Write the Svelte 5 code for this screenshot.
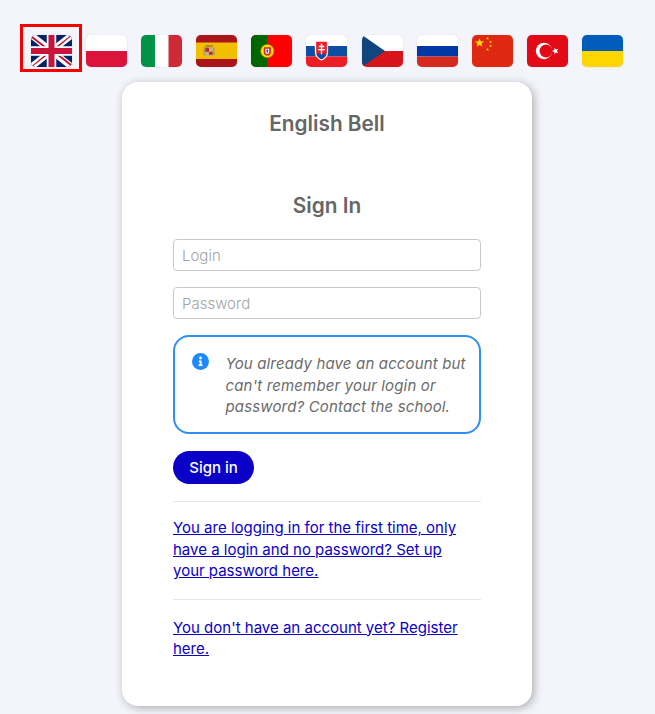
<script lang="ts">
	const flags = ['gb', 'pl', 'it', 'es', 'pt', 'sk', 'cz', 'ru', 'cn', 'tr', 'ua'];
	const star = 'M0-1 .29-.31 1-.31 .43 .12 .62 .81 0 .4-.62 .81-.43 .12-1-.31-.29-.31Z';
</script>

<div class="page">
	<nav class="flags">
		{#each flags as flag, index}
			<a class="flag" class:active={index === 0} href="#{flag}" aria-label={flag}>
				<svg viewBox="0 0 41 32" width="41" height="32">
					{#if flag === 'gb'}
						<rect width="41" height="32" fill="#012169" />
						<path d="M0 0 41 32M41 0 0 32" stroke="#fff" stroke-width="6.5" />
						<path d="M0 0 17 13.3H14L0 2.4ZM41 0V.4L26 13H23.4L40 0ZM41 32 24 18.7H27L41 29.6ZM0 32V31.6L15 19H17.6L1 32Z" fill="#c8102e" />
						<path d="M20.5 0V32M0 16H41" stroke="#fff" stroke-width="9.5" />
						<path d="M20.5 0V32M0 16H41" stroke="#c8133a" stroke-width="6" />
					{:else if flag === 'pl'}
						<rect width="41" height="16" fill="#fff" />
						<rect y="16" width="41" height="16" fill="#dc143c" />
					{:else if flag === 'it'}
						<rect width="14" height="32" fill="#009246" />
						<rect x="14" width="14" height="32" fill="#fff" />
						<rect x="27.5" width="13.5" height="32" fill="#ce2b37" />
					{:else if flag === 'es'}
						<rect width="41" height="32" fill="#aa151b" />
						<rect y="7.5" width="41" height="16.5" fill="#f1bf00" />
						<rect x="9" y="10" width="8" height="2.5" rx="1" fill="#c08a2a" />
						<path d="M9 12.5H17V18.5C17 20.5 15 21.5 13 21.5 11 21.5 9 20.5 9 18.5Z" fill="#c8b27a" />
						<rect x="9.3" y="12.8" width="3.7" height="4" fill="#b5302a" />
						<rect x="13" y="16.8" width="3.7" height="3" fill="#b5302a" />
						<rect x="7.5" y="12.5" width="1.3" height="8" fill="#a8937a" />
						<rect x="17.2" y="12.5" width="1.3" height="8" fill="#a8937a" />
					{:else if flag === 'pt'}
						<rect width="41" height="32" fill="#f00" />
						<rect width="16.3" height="32" fill="#060" />
						<circle cx="16.3" cy="16" r="6.6" fill="#ffe000" stroke="#8a9a20" stroke-width=".6" />
						<path d="M12.8 12.3H19.8V17.5C19.8 19.6 18 20.6 16.3 20.6 14.6 20.6 12.8 19.6 12.8 17.5Z" fill="#e02020" />
						<path d="M14.4 13.8H18.2V17C18.2 18.2 17.2 18.9 16.3 18.9 15.4 18.9 14.4 18.2 14.4 17Z" fill="#fff" />
						<path d="M16.3 14.4V18M15.2 15.9H17.4" stroke="#2a4fa0" stroke-width="1" />
					{:else if flag === 'sk'}
						<rect width="41" height="11" fill="#fff" />
						<rect y="11" width="41" height="10.5" fill="#0b4ea2" />
						<rect y="21.5" width="41" height="10.5" fill="#ee1c25" />
						<path d="M9.5 6H21.5V17C21.5 21 18.5 23.5 15.5 25 12.5 23.5 9.5 21 9.5 17Z" fill="#ee1c25" stroke="#fff" stroke-width="1.3" />
						<path d="M15.5 8.5V20M12.8 11.5H18.2M12 14.6H19" stroke="#fff" stroke-width="1.4" />
						<path d="M10.5 19.5C12 18 14 18 15.5 19.5 17 18 19 18 20.5 19.5 19.5 22 17.5 23.2 15.5 24.2 13.5 23.2 11.5 22 10.5 19.5Z" fill="#0b4ea2" />
					{:else if flag === 'cz'}
						<rect width="41" height="16" fill="#fff" />
						<rect y="16" width="41" height="16" fill="#d7141a" />
						<path d="M0 0 23 16 0 32Z" fill="#11457e" />
					{:else if flag === 'ru'}
						<rect width="41" height="11" fill="#fff" />
						<rect y="11" width="41" height="10.5" fill="#0039a6" />
						<rect y="21.5" width="41" height="10.5" fill="#d52b1e" />
					{:else if flag === 'cn'}
						<rect width="41" height="32" fill="#de2910" />
						<path d={star} transform="translate(7.5 8) scale(4.6)" fill="#ffde00" />
						<path d={star} transform="translate(15.5 3.5) scale(1.5)" fill="#ffde00" />
						<path d={star} transform="translate(18.5 7) scale(1.5)" fill="#ffde00" />
						<path d={star} transform="translate(18.5 11) scale(1.5)" fill="#ffde00" />
						<path d={star} transform="translate(15.5 14.5) scale(1.5)" fill="#ffde00" />
					{:else if flag === 'tr'}
						<rect width="41" height="32" fill="#e30a17" />
						<circle cx="17" cy="16" r="8.2" fill="#fff" />
						<circle cx="19" cy="16" r="6.5" fill="#e30a17" />
						<path d={star} transform="translate(28.5 16) rotate(-90) scale(3.6)" fill="#fff" />
					{:else if flag === 'ua'}
						<rect width="41" height="16" fill="#005bbb" />
						<rect y="16" width="41" height="16" fill="#ffd500" />
					{/if}
				</svg>
			</a>
		{/each}
	</nav>

	<main class="card">
		<h1>English Bell</h1>
		<h2>Sign In</h2>
		<form class="form" on:submit|preventDefault>
			<input type="text" placeholder="Login" />
			<input type="password" placeholder="Password" />
			<div class="info">
				<svg class="info-icon" viewBox="0 0 17 17" width="17" height="17">
					<circle cx="8.5" cy="8.5" r="8.5" fill="#1e88ff" />
					<circle cx="8.5" cy="5" r="1.4" fill="#fff" />
					<path d="M6.8 7.5H9.6V11.6H10.6V13H6.6V11.6H7.6V8.9H6.8Z" fill="#fff" />
				</svg>
				<p>You already have an account but can't remember your login or password? Contact the school.</p>
			</div>
			<button type="submit">Sign in</button>
		</form>
		<div class="links">
			<a href="#first">You are logging in for the first time, only have a login and no password? Set up your password here.</a>
		</div>
		<div class="links last">
			<a href="#register">You don't have an account yet? Register here.</a>
		</div>
	</main>
</div>

<style>
	:global(body) {
		background: #f4f5fb;
		font-family: 'Inter', 'Liberation Sans', sans-serif;
	}

	.page {
		height: 714px;
		overflow: hidden;
		box-sizing: border-box;
		padding-top: 24px;
	}

	.flags {
		display: flex;
		height: 48px;
		padding-left: 31px;
		gap: 14.1px;
		align-items: flex-start;
	}

	.flag {
		display: block;
		position: relative;
		width: 41px;
		height: 32px;
		margin-top: 11px;
	}

	.flag svg {
		display: block;
		border-radius: 5px;
		box-shadow: 0 0 1px rgba(90, 90, 120, 0.4);
	}

	.active::after {
		content: '';
		position: absolute;
		left: -11px;
		top: -11px;
		width: 56px;
		height: 42px;
		border: 3px solid #f50000;
	}

	.card {
		width: 410px;
		height: 624px;
		margin: 10px 0 0 122px;
		box-sizing: border-box;
		padding: 29px 51px 0;
		background: #fff;
		border-radius: 16px;
		box-shadow: 2px 2px 10px rgba(0, 0, 0, 0.3);
		color: #666;
	}

	h1 {
		margin: 0;
		font-size: 20.8px;
		line-height: 26px;
		font-weight: 600;
		text-align: center;
		color: #666;
	}

	h2 {
		margin: 56px 0 0;
		font-size: 20.8px;
		line-height: 26px;
		font-weight: 600;
		text-align: center;
		color: #666;
	}

	.form {
		display: flex;
		flex-direction: column;
		align-items: flex-start;
		margin-top: 20px;
	}

	input {
		width: 100%;
		height: 32px;
		box-sizing: border-box;
		margin-bottom: 16px;
		padding: 0 8px;
		border: 1px solid #c8c8c8;
		border-radius: 4px;
		font-family: inherit;
		font-size: 15px;
		font-weight: 300;
	}

	input::placeholder {
		color: #a3a3a3;
	}

	.info {
		display: flex;
		width: 100%;
		height: 99px;
		box-sizing: border-box;
		padding: 16px 6px 0 16.5px;
		border: 2px solid #2e8ff5;
		border-radius: 16px;
	}

	.info-icon {
		flex: none;
		margin: 0 17px 0 0;
	}

	.info p {
		margin: 0;
		font-size: 15px;
		line-height: 21.5px;
		letter-spacing: 0.15px;
		font-style: italic;
		color: #6b6b6b;
	}

	button {
		width: 81px;
		height: 33px;
		margin-top: 17px;
		padding: 0;
		border: none;
		border-radius: 17px;
		background: #0a00c8;
		color: #fff;
		font-family: inherit;
		font-size: 15px;
		font-weight: 500;
	}

	.links {
		margin-top: 17px;
		padding: 15px 14px 17px 0;
		font-size: 15px;
		line-height: 21.7px;
		border-top: 1px solid #e6e6e6;
	}

	.links + .links {
		margin-top: 0;
		padding-top: 16.5px;
	}

	.links a {
		color: #0a00c8;
	}
</style>
